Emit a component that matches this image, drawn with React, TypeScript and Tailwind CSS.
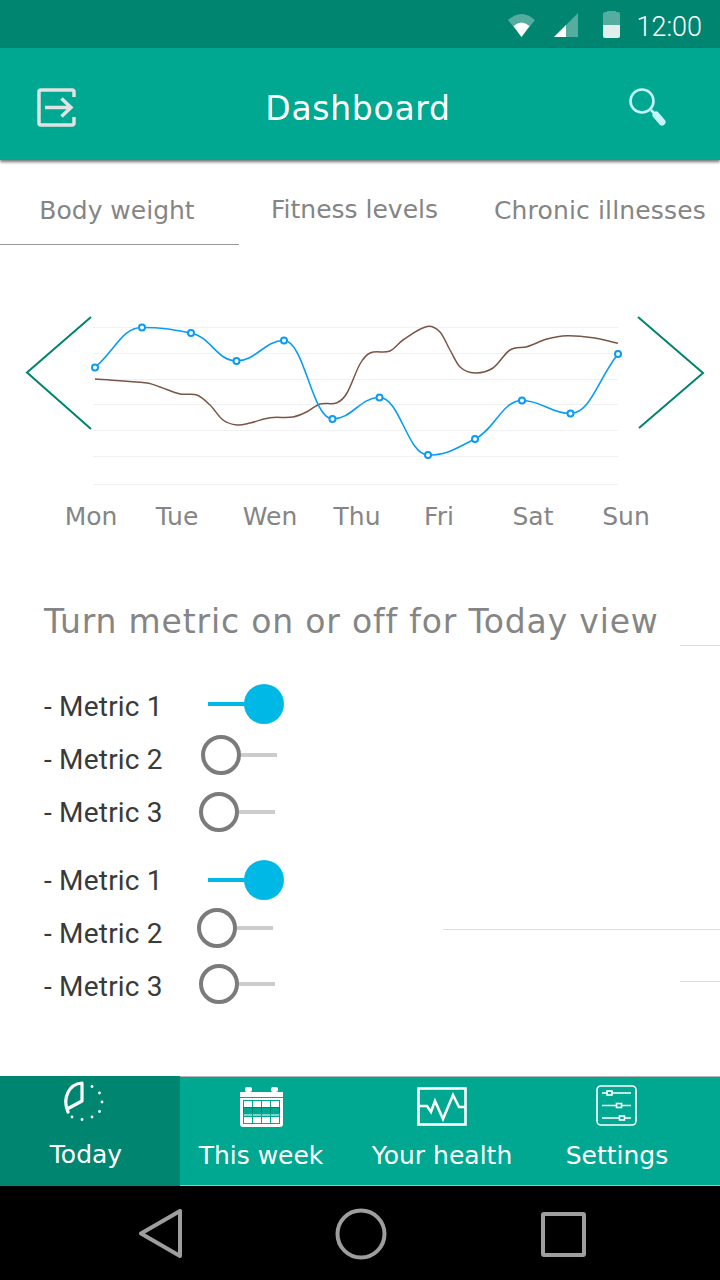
import { ReactNode } from "react";

const bluePoints: [number, number][] = [
  [95, 367.5], [142, 327.5], [191, 333], [236.5, 361], [284, 340.5], [332.5, 419],
  [379.5, 397.5], [428, 455], [475, 439], [522, 400.5], [570.5, 413.5], [618, 354],
];

const brownPoints: [number, number][] = [
  [95, 379], [147, 383], [160, 387], [180, 394], [197, 395], [210, 405], [223, 420],
  [237, 425], [250, 423], [270, 417.7], [293, 417], [307, 411.7], [320, 404], [337, 402.7],
  [347, 393], [360, 364], [370, 353], [390, 351], [403, 340], [427, 326.5], [440, 332],
  [450, 350], [460, 367], [475, 373], [493, 368], [510, 350], [527, 346.7], [547, 339],
  [567, 335.7], [593, 337.7], [618, 343.3],
];

const gridLines = [327, 353, 379, 404, 430, 456, 484];
const days = ["Mon", "Tue", "Wen", "Thu", "Fri", "Sat", "Sun"];

// cubic through the points; flat at peaks when monotone, plain catmull-rom otherwise
function smoothPath(points: [number, number][], monotone: boolean) {
  const slopes = points.map((p, i) => {
    const prev = points[i - 1];
    const next = points[i + 1];
    if (!prev) return (next[1] - p[1]) / (next[0] - p[0]);
    if (!next) return (p[1] - prev[1]) / (p[0] - prev[0]);
    if (!monotone) return (next[1] - prev[1]) / (next[0] - prev[0]);
    const a = (p[1] - prev[1]) / (p[0] - prev[0]);
    const b = (next[1] - p[1]) / (next[0] - p[0]);
    if (a * b <= 0) return 0;
    return (2 * a * b) / (a + b);
  });
  let d = `M${points[0][0]} ${points[0][1]}`;
  for (let i = 1; i < points.length; i++) {
    const [x0, y0] = points[i - 1];
    const [x1, y1] = points[i];
    const h = (x1 - x0) * (monotone ? 0.42 : 0.34);
    d += ` C${x0 + h} ${y0 + slopes[i - 1] * h} ${x1 - h} ${y1 - slopes[i] * h} ${x1} ${y1}`;
  }
  return d;
}

function StatusBar() {
  return (
    <div className="flex h-12 items-center justify-end bg-[#008571] pr-[18px]">
      <svg width="120" height="48" viewBox="0 0 120 48" className="mr-[10px] mt-[2px]">
        <path d="M2 19 Q15.500 7 29 19 L15.500 36 Z" fill="#fff" fillOpacity="0.33" />
        <path d="M7.500 25 Q15.500 18 23.500 25 L15.500 36 Z" fill="#fff" />
        <path d="M48 36 L72 36 L72 12 Z" fill="#fff" fillOpacity="0.33" />
        <path d="M48 36 L60 36 L60 24 Z" fill="#fff" />
        <path d="M97 13 Q97 11 99 11 L101 11 L101 10 L110 10 L110 11 L112 11 Q114 11 114 13 L114 24 L97 24 Z" fill="#fff" fillOpacity="0.33" />
        <path d="M97 24 L114 24 L114 35 Q114 37 112 37 L99 37 Q97 37 97 35 Z" fill="#e0efec" />
      </svg>
      <span className="mt-[6px] font-['Roboto',sans-serif] text-[27px] font-light leading-none text-white">12:00</span>
    </div>
  );
}

function AppBar() {
  return (
    <header className="relative z-10 flex h-28 items-center justify-between bg-[#00a791] pl-[36px] pr-[53px] pt-[8px] shadow-[0_2px_3px_rgba(0,0,0,0.55)]">
      <svg width="40" height="40" viewBox="0 0 40 40" fill="none">
        <path d="M38 9 V4 Q38 2 36 2 H5 Q3 2 3 4 V35 Q3 37 5 37 H36 Q38 37 38 35 V29" stroke="#e2e2e2" strokeWidth="3.500" />
        <path d="M9 19.500 H35 M25.500 10.500 L35 19.500 L25.500 28.500" stroke="#e2e2e2" strokeWidth="3.500" />
      </svg>
      <h1 className="ml-[13px] font-['DejaVu_Sans',sans-serif] text-[33px] leading-none tracking-[0.7px] text-white">Dashboard</h1>
      <svg width="40" height="40" viewBox="0 0 40 40" fill="none">
        <circle cx="15" cy="13" r="11.500" stroke="#c5f5f8" strokeWidth="2.600" />
        <path d="M24 22 L28 26" stroke="#c5f5f8" strokeWidth="2.500" />
        <path d="M29 27 L35 34" stroke="#c5f5f8" strokeWidth="7" strokeLinecap="round" />
      </svg>
    </header>
  );
}

function Tabs() {
  return (
    <nav className="flex h-[85px] items-start font-['DejaVu_Sans',sans-serif] text-[25px] leading-none text-[#858585]">
      <div className="flex h-[85px] w-[239px] justify-center border-b border-[#999] pt-[38px] pr-[5px]">Body weight</div>
      <div className="ml-[32px] pt-[37px]">Fitness levels</div>
      <div className="ml-[56px] whitespace-nowrap pt-[38px] tracking-[0.15px]">Chronic illnesses</div>
    </nav>
  );
}

function Chart() {
  return (
    <section className="mt-[45px]">
      <svg width="720" height="200" viewBox="0 290 720 200" fill="none" className="block">
        {gridLines.map((y) => (
          <line key={y} x1="93" x2="618" y1={y + 0.5} y2={y + 0.5} stroke="#f1f1f1" strokeWidth="1" />
        ))}
        <path d="M91 317 L27 372.500 L91 429" stroke="#00846f" strokeWidth="2" />
        <path d="M638 317 L703 373 L639 428" stroke="#00846f" strokeWidth="2" />
        <path d={smoothPath(brownPoints, false)} stroke="#795548" strokeWidth="1.500" />
        <path d={smoothPath(bluePoints, true)} stroke="#0a9bf5" strokeWidth="1.600" />
        {bluePoints.map(([x, y]) => (
          <circle key={x} cx={x} cy={y} r="3" fill="#fff" stroke="#0a9bf5" strokeWidth="2" />
        ))}
      </svg>
      <div className="mt-[11px] grid grid-cols-[86px_86px_100px_74px_90px_98px_88px] pl-[48px] font-['DejaVu_Sans',sans-serif] text-[25px] leading-[32px] text-[#858585]">
        {days.map((day) => (
          <span key={day} className="text-center">{day}</span>
        ))}
      </div>
    </section>
  );
}

function Toggle({ on }: { on?: boolean }) {
  if (on) {
    return (
      <div className="flex items-center">
        <div className="h-1 w-[40px] bg-[#00b8e6]" />
        <div className="-ml-[4px] size-10 rounded-full bg-[#00b8e6]" />
      </div>
    );
  }
  return (
    <div className="flex items-center">
      <div className="size-10 rounded-full border-[4px] border-[#7b7b7b] bg-white" />
      <div className="h-1 w-[36px] bg-[#cccccc]" />
    </div>
  );
}

function MetricRow({ label, children }: { label: string; children: ReactNode }) {
  return (
    <div className="flex h-[53px] items-center">
      <span className="w-[157px] shrink-0 font-['Roboto',sans-serif] text-[28px] leading-none tracking-[0.2px] text-[#3a3a3a]">- {label}</span>
      {children}
    </div>
  );
}

function Metrics() {
  return (
    <section className="mt-[71px] pl-[44px]">
      <div className="flex h-[48px] items-start">
        <h2 className="mt-[1px] whitespace-nowrap font-['DejaVu_Sans',sans-serif] text-[33px] leading-none tracking-[0.83px] text-[#858585]">Turn metric on or off for Today view</h2>
        <div className="ml-auto mt-[41px] h-px w-10 bg-[#dddddd]" />
      </div>
      <div className="mt-[28px]">
        <MetricRow label="Metric 1"><div className="ml-[7px] -mt-[6px]"><Toggle on /></div></MetricRow>
        <MetricRow label="Metric 2"><div className="-mt-[10px]"><Toggle /></div></MetricRow>
        <MetricRow label="Metric 3"><div className="-ml-[2px] -mt-[2px]"><Toggle /></div></MetricRow>
      </div>
      <div className="mt-[15px]">
        <MetricRow label="Metric 1"><div className="ml-[7px] -mt-[2px]"><Toggle on /></div></MetricRow>
        <MetricRow label="Metric 2">
          <div className="-ml-[4px] -mt-[12px]"><Toggle /></div>
          <div className="ml-auto -mt-[8px] h-px w-[277px] bg-[#dddddd]" />
        </MetricRow>
        <MetricRow label="Metric 3">
          <div className="-ml-[2px] -mt-[6px]"><Toggle /></div>
          <div className="ml-auto -mt-[10px] h-px w-10 bg-[#dddddd]" />
        </MetricRow>
      </div>
    </section>
  );
}

function ClockIcon() {
  const dots = [[29, 6.500], [36.500, 13], [39, 22], [36.500, 31.500], [29, 37], [19, 39.500], [9, 37]];
  return (
    <svg width="46" height="46" viewBox="0 0 46 46" fill="none">
      <path d="M5 32 C-1 18 6 4 19 3 L19 21 L6 28" stroke="#fff" strokeWidth="3.200" strokeLinejoin="round" strokeLinecap="round" />
      {dots.map(([x, y]) => (
        <circle key={x + "-" + y} cx={x} cy={y} r="1.400" fill="#fff" />
      ))}
    </svg>
  );
}

function CalendarIcon() {
  const cols = [3.500, 12.500, 21.500, 30.500];
  return (
    <svg width="43" height="40" viewBox="0 0 43 40">
      <rect x="5" y="0" width="7" height="5" rx="2" fill="#fff" />
      <rect x="31" y="0" width="7" height="5" rx="2" fill="#fff" />
      <rect x="0" y="5" width="43" height="5" fill="#fff" />
      <path d="M0 11 H43 V37 Q43 40 40 40 H3 Q0 40 0 37 Z" fill="#fff" />
      <rect x="3.500" y="13.500" width="36" height="23" fill="none" stroke="#00a791" strokeWidth="1" />
      {cols.map((x) => (
        <g key={x} fill="none">
          <rect x={x} y="13.500" width="9" height="7" stroke="#00a791" />
          <rect x={x} y="20.500" width="9" height="6" fill="#00a791" stroke="#00846f" />
          <rect x={x} y="26.500" width="9" height="3" fill="#7fd3c7" stroke="#00a791" />
          <rect x={x} y="29.500" width="9" height="7" stroke="#00a791" />
        </g>
      ))}
    </svg>
  );
}

function HealthIcon() {
  return (
    <svg width="50" height="40" viewBox="0 0 50 40" fill="none">
      <rect x="1.500" y="1.500" width="47" height="36" stroke="#fff" strokeWidth="2.600" />
      <path d="M1 19 H10 L14 25 L18 14 L26 32 L36 8 L42 20 H49" stroke="#fff" strokeWidth="2.600" />
    </svg>
  );
}

function SettingsIcon() {
  return (
    <svg width="42" height="42" viewBox="0 0 42 42" fill="none" stroke="#fff" strokeWidth="1.600">
      <rect x="1" y="1" width="39" height="39" rx="4" />
      <path d="M6 8 H35 M6 20.500 H35 M6 33 H35" />
      <rect x="11" y="6" width="5" height="4" fill="#00a791" />
      <rect x="20.500" y="18.500" width="5" height="4" fill="#00a791" />
      <rect x="23.500" y="31" width="5" height="4" fill="#00a791" />
    </svg>
  );
}

function BottomTab({ icon, label, active }: { icon: ReactNode; label: string; active?: boolean }) {
  return (
    <div className={`flex flex-col items-center ${active ? "bg-[#008571] pr-[8px]" : "border-y border-y-[#b5b5b5] bg-[#00a791]"}`}>
      <div className="flex h-[50px] items-end">{icon}</div>
      <span className="mt-[13px] font-['DejaVu_Sans',sans-serif] text-[25px] leading-[32px] text-white">{label}</span>
    </div>
  );
}

function BottomTabs() {
  return (
    <div className="mt-[63px] grid h-[110px] grid-cols-[180px_162px_200px_150px_28px]">
      <BottomTab active icon={<ClockIcon />} label="Today" />
      <BottomTab icon={<CalendarIcon />} label="This week" />
      <BottomTab icon={<HealthIcon />} label="Your health" />
      <BottomTab icon={<SettingsIcon />} label="Settings" />
      <div className="border-y border-y-[#b5b5b5] bg-[#00a791]" />
    </div>
  );
}

function SystemNav() {
  return (
    <div className="flex h-[94px] items-center bg-black pl-[138px] pt-[2px]">
      <svg width="45" height="50" viewBox="0 0 45 50" fill="none" stroke="#9e9e9e" strokeWidth="4" strokeLinejoin="round">
        <path d="M3 24.500 L42 2 V47 Z" />
      </svg>
      <svg width="52" height="52" viewBox="0 0 52 52" fill="none" stroke="#9e9e9e" strokeWidth="4" className="ml-[152px]">
        <circle cx="26" cy="26" r="23.500" />
      </svg>
      <div className="ml-[154px] size-[45px] rounded-[3px] border-[4px] border-[#9e9e9e]" />
    </div>
  );
}

export default function App() {
  return (
    <main className="h-[1280px] w-[720px] overflow-hidden bg-white">
      <StatusBar />
      <AppBar />
      <Tabs />
      <Chart />
      <Metrics />
      <BottomTabs />
      <SystemNav />
    </main>
  );
}
